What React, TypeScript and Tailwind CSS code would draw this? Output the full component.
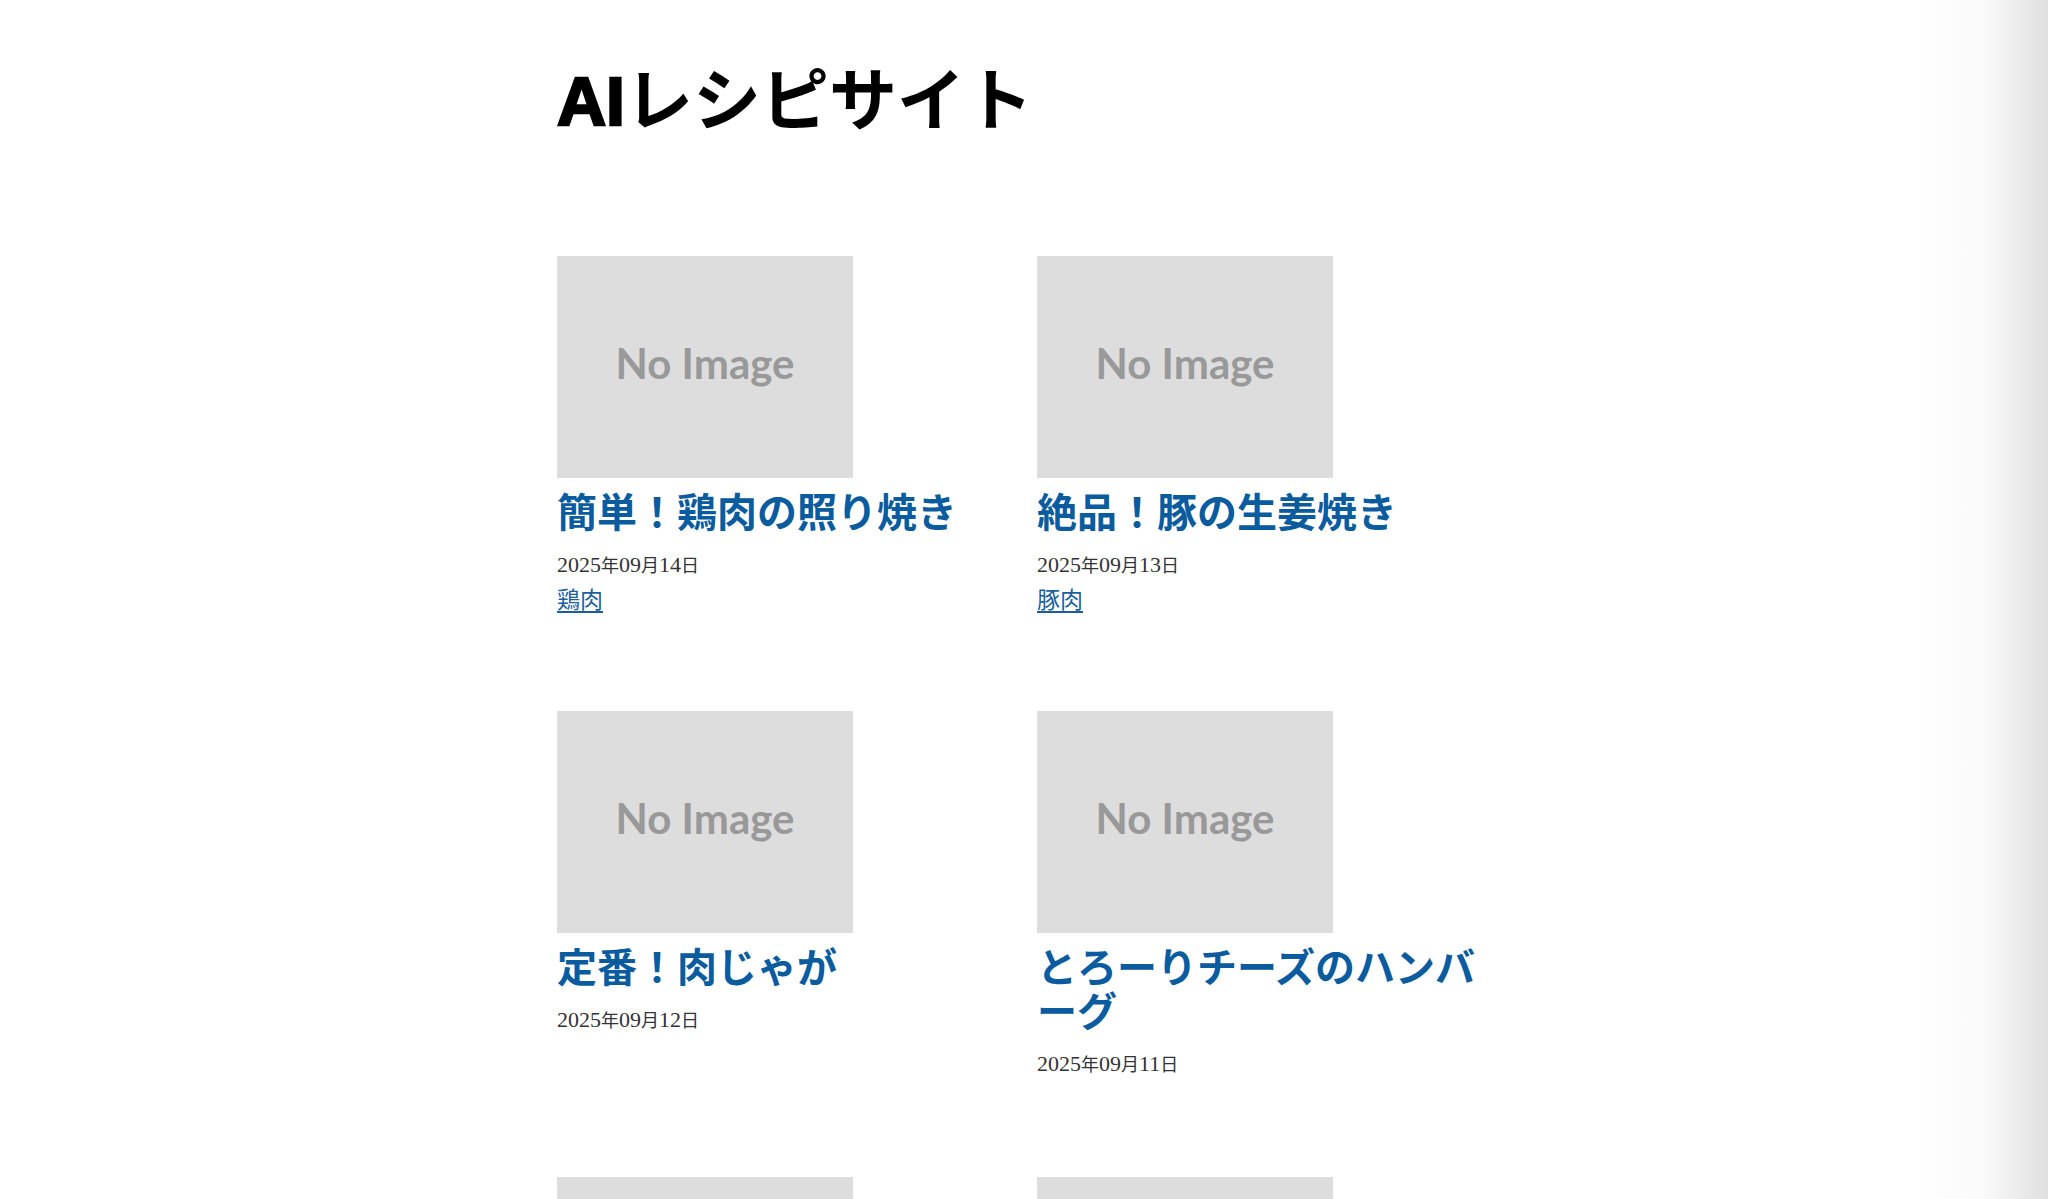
import React from "react";

type Recipe = {
  title: string;
  date: string;
  category?: string;
};

const recipes: Recipe[] = [
  { title: "簡単！鶏肉の照り焼き", date: "2025年09月14日", category: "鶏肉" },
  { title: "絶品！豚の生姜焼き", date: "2025年09月13日", category: "豚肉" },
  { title: "定番！肉じゃが", date: "2025年09月12日" },
  { title: "とろーりチーズのハンバーグ", date: "2025年09月11日" },
];

function DateText({ value }: { value: string }) {
  const parts = value.split(/(\d+)/).filter((p) => p.length > 0);
  return (
    <p className="mt-[18px] leading-[28px] text-[22px] text-[#333333] font-['Liberation_Serif','Noto_Sans_CJK_JP',serif]">
      {parts.map((p, i) =>
        /^\d+$/.test(p) ? (
          <span key={i} className="text-[22px]">
            {p}
          </span>
        ) : (
          <span
            key={i}
            className="text-[18px] font-['Noto_Sans_CJK_JP',sans-serif]"
          >
            {p}
          </span>
        )
      )}
    </p>
  );
}

function Placeholder({ label = true }: { label?: boolean }) {
  return (
    <div className="w-[296px] h-[222px] bg-[#dddddd] flex items-center justify-center">
      {label && (
        <span className="font-['Lato',sans-serif] font-bold text-[42px] text-[#999999] leading-none pb-[8px]">
          No Image
        </span>
      )}
    </div>
  );
}

function Card({ recipe }: { recipe: Recipe }) {
  return (
    <article className="flex flex-col items-start">
      <a href="#" className="block">
        <Placeholder />
      </a>
      <h2 className="mt-[10px] w-full text-[40px] leading-[44px] font-bold text-[#0b5c9e] font-['Noto_Sans_CJK_JP',sans-serif]">
        <a href="#">{recipe.title}</a>
      </h2>
      <DateText value={recipe.date} />
      {recipe.category && (
        <a
          href="#"
          className="mt-[5px] text-[23px] leading-[28px] text-[#1a5e9e] underline underline-offset-[3px] font-['Noto_Sans_CJK_JP',sans-serif]"
        >
          {recipe.category}
        </a>
      )}
    </article>
  );
}

export default function App() {
  return (
    <div className="relative h-[1199px] w-full overflow-hidden bg-white">
      <main className="mx-auto w-[934px] pt-[61px]">
        <h1 className="text-[68px] leading-[80px] font-bold text-black font-['Liberation_Sans','Noto_Sans_CJK_JP',sans-serif]">
          <span className="[-webkit-text-stroke:2.5px_black]">AI</span>
          レシピサイト
        </h1>
        <section className="mt-[115px] grid grid-cols-[454px_454px] gap-x-[26px] gap-y-[99px]">
          {recipes.map((r) => (
            <Card key={r.title} recipe={r} />
          ))}
          <div>
            <Placeholder label={false} />
          </div>
          <div>
            <Placeholder label={false} />
          </div>
        </section>
      </main>
      <div className="pointer-events-none absolute right-0 top-0 h-full w-[130px] bg-gradient-to-r from-transparent via-[#fafafa] to-[#e0e0e0]" />
    </div>
  );
}
